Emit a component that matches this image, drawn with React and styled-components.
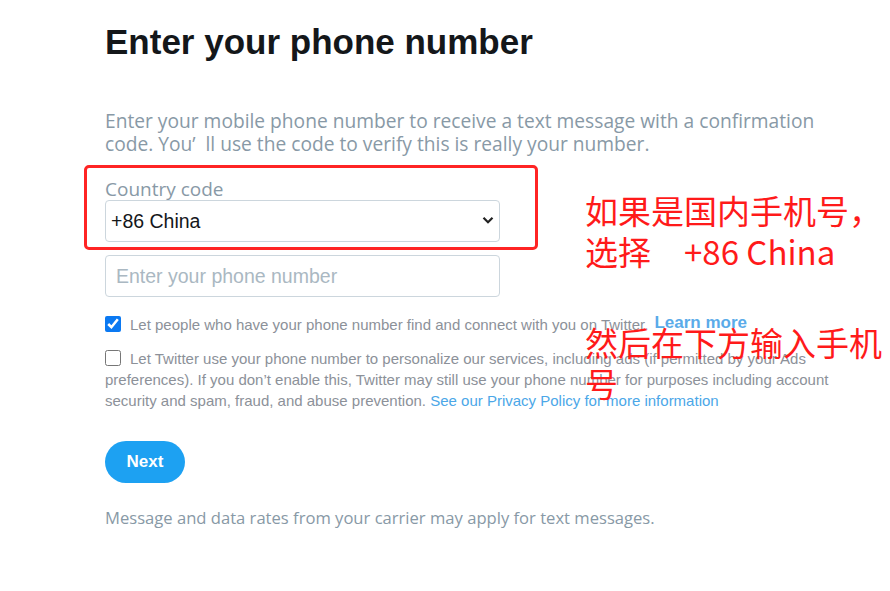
import React from "react";
import styled, { createGlobalStyle } from "styled-components";

const GlobalStyle = createGlobalStyle`
  html, body {
    margin: 0;
    padding: 0;
    background: #fff;
  }
  body {
    font-family: "Liberation Sans", Arial, sans-serif;
  }
`;

const Page = styled.div`
  position: relative;
  width: 890px;
  height: 591px;
  overflow: hidden;
  background: #fff;
`;

const Content = styled.div`
  display: flex;
  flex-direction: column;
  width: 732px;
  padding: 22px 0 0 105px;
`;

const Title = styled.h1`
  margin: 0;
  font-family: "Liberation Sans", Arial, sans-serif;
  font-size: 35px;
  font-weight: 700;
  line-height: 40px;
  color: #14171a;
`;

const Lead = styled.p`
  margin: 47px 0 0;
  font-family: "Open Sans", sans-serif;
  font-size: 19.2px;
  line-height: 23px;
  color: #8899a6;
`;

const Label = styled.label`
  display: block;
  margin-top: 23px;
  font-family: "Open Sans", sans-serif;
  font-size: 19px;
  line-height: 22px;
  color: #8899a6;
`;

const SelectWrap = styled.div`
  position: relative;
  width: 395px;
`;

const Select = styled.select`
  appearance: none;
  width: 100%;
  height: 42px;
  padding: 0 30px 0 5px;
  border: 1px solid #ccd6dd;
  border-radius: 4px;
  background: #fff;
  font-family: "Liberation Sans", Arial, sans-serif;
  font-size: 19.5px;
  color: #14171a;
  outline: none;
`;

const Chevron = styled.svg`
  position: absolute;
  right: 6px;
  top: 16px;
  pointer-events: none;
`;

const Input = styled.input`
  box-sizing: border-box;
  width: 395px;
  height: 42px;
  margin-top: 13px;
  padding: 0 10px;
  border: 1px solid #ccd6dd;
  border-radius: 4px;
  font-family: "Liberation Sans", Arial, sans-serif;
  font-size: 19.5px;
  color: #14171a;
  outline: none;

  &::placeholder {
    color: #aab8c2;
  }
`;

const Check = styled.p`
  margin: ${(p) => p.$top}px 0 0;
  font-family: "Liberation Sans", Arial, sans-serif;
  font-size: 15px;
  line-height: 21px;
  color: #8c9199;
`;

const Box = styled.input`
  width: 16px;
  height: 16px;
  margin: 0 9px 0 0;
  vertical-align: -2px;
  accent-color: #0b79f2;
`;

const Learn = styled.a`
  margin-left: 6px;
  font-size: 17px;
  font-weight: 700;
  color: #5aabe9;
  text-decoration: none;
  vertical-align: 2px;
`;

const Link = styled.a`
  color: #4ba7e8;
  text-decoration: none;
`;

const NextButton = styled.button`
  align-self: flex-start;
  width: 80px;
  height: 42px;
  margin-top: 30px;
  border: none;
  border-radius: 21px;
  background: #1da1f2;
  font-family: "Liberation Sans", Arial, sans-serif;
  font-size: 17px;
  font-weight: 700;
  color: #fff;
`;

const Footnote = styled.p`
  margin: 25px 0 0;
  font-family: "Open Sans", sans-serif;
  font-size: 16.6px;
  line-height: 20px;
  color: #8899a6;
`;

/* annotations drawn over the page */
const Frame = styled.div`
  position: absolute;
  left: 84px;
  top: 165px;
  width: 448px;
  height: 79px;
  border: 3px solid #ff2424;
  border-radius: 5px;
`;

const Note = styled.div`
  position: absolute;
  left: ${(p) => p.$x}px;
  top: ${(p) => p.$y}px;
  width: ${(p) => p.$w}px;
  font-family: "Noto Sans CJK SC", "Open Sans", sans-serif;
  font-size: 33px;
  line-height: 41px;
  color: #ff1a1a;
`;

export default function App() {
  return (
    <Page>
      <GlobalStyle />
      <Content>
        <Title>Enter your phone number</Title>
        <Lead>
          Enter your mobile phone number to receive a text message with a
          confirmation code. You’&nbsp;&nbsp;ll use the code to verify this is
          really your number.
        </Lead>
        <Label>Country code</Label>
        <SelectWrap>
          <Select defaultValue="86">
            <option value="86">+86 China</option>
          </Select>
          <Chevron width="12" height="9" viewBox="0 0 12 9">
            <path
              d="M1.5 1.8 L6 6.3 L10.5 1.8"
              fill="none"
              stroke="#222"
              strokeWidth="2.2"
            />
          </Chevron>
        </SelectWrap>
        <Input placeholder="Enter your phone number" />
        <Check $top={15}>
          <Box type="checkbox" defaultChecked />
          Let people who have your phone number find and connect with you on
          Twitter.
          <Learn href="#">Learn more</Learn>
        </Check>
        <Check $top={13}>
          <Box type="checkbox" />
          Let Twitter use your phone number to personalize our services,
          including ads (if permitted by your Ads preferences). If you don’t
          enable this, Twitter may still use your phone number for purposes
          including account security and spam, fraud, and abuse prevention.{" "}
          <Link href="#">See our Privacy Policy for more information</Link>
        </Check>
        <NextButton>Next</NextButton>
        <Footnote>
          Message and data rates from your carrier may apply for text messages.
        </Footnote>
      </Content>

      <Frame />
      <Note $x={585} $y={190} $w={310}>
        如果是国内手机号，
        <br />
        选择　+86 China
      </Note>
      <Note $x={585} $y={322} $w={305}>
        然后在下方输入手机号
      </Note>
    </Page>
  );
}
